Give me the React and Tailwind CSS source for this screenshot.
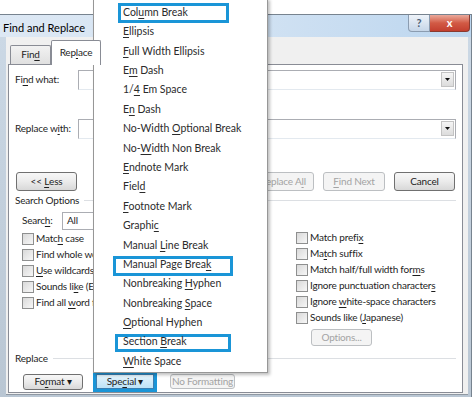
import React from 'react'

// items of the "Special" popup; & marks the access key
const SPECIAL = [
  { t: 'Col&umn Break', box: 'left-[24px] top-0 w-[111px] h-[20px]' },
  { t: '&Ellipsis' },
  { t: '&Full Width Ellipsis' },
  { t: 'E&m Dash' },
  { t: '1/&4 Em Space' },
  { t: 'E&n Dash' },
  { t: 'No-Width &Optional Break' },
  { t: 'No-&Width Non Break' },
  { t: '&Endnote Mark' },
  { t: 'Fiel&d' },
  { t: '&Footnote Mark' },
  { t: 'Graphi&c' },
  { t: 'Manual &Line Break' },
  { t: 'Manual Page Brea&k', box: 'left-[19px] top-[1px] w-[120px] h-[20px]' },
  { t: 'Nonbreaking &Hyphen' },
  { t: 'Nonbreaking &Space' },
  { t: '&Optional Hyphen' },
  { t: 'Section &Break', box: 'left-[21px] top-[1px] w-[116px] h-[18px]' },
  { t: '&White Space' },
]

// left options are cut off by the popup, as in the screenshot
const LEFT_OPTS = ['Matc&h case', 'Find whole wo', '&Use wildcards', 'Sounds li&ke (En', 'Find all &word f']
const RIGHT_OPTS = ['Match prefi&x', 'Ma&tch suffix', 'Match half/full width for&ms', 'Ignore punctuation character&s', 'Ignore &white-space characters', 'Sounds like (&Japanese)']

function Acc({ t }) {
  const i = t.indexOf('&')
  if (i < 0) return <>{t}</>
  return (
    <>
      {t.slice(0, i)}
      <span className="underline decoration-1 underline-offset-[1.5px]">{t[i + 1]}</span>
      {t.slice(i + 2)}
    </>
  )
}

function Btn({ t, className = '', off }) {
  return (
    <div
      className={
        'flex items-center justify-center rounded-[3px] border whitespace-nowrap ' +
        (off
          ? 'border-[#bcbfc2] bg-[#f4f4f4] text-[#a3a3a3] '
          : 'border-[#707070] bg-gradient-to-b from-[#f7f7f7] via-[#ebebeb] to-[#d8d8d8] text-[#1c1c1c] ') +
        className
      }
    >
      <Acc t={t} />
    </div>
  )
}

function Check({ t }) {
  return (
    <div className="flex items-center h-[16px] gap-[2px] whitespace-nowrap">
      <span className="shrink-0 w-[12px] h-[12px] border border-[#8e8f8f] bg-gradient-to-br from-[#d9d9d9] to-[#f7f7f7]" />
      <span>
        <Acc t={t} />
      </span>
    </div>
  )
}

function Combo({ className = '' }) {
  return (
    <div className={'flex items-center justify-end h-[20px] bg-white border border-[#abadb3] border-b-[#e3e9ef] ' + className}>
      <div className="mr-[1px] w-[13px] h-[15px] flex items-center justify-center border border-[#c3c3c3] bg-gradient-to-b from-[#f5f5f5] to-[#dcdcdc]">
        <svg width="5" height="3" viewBox="0 0 5 3">
          <path d="M0 0h5L2.5 3z" fill="#111" />
        </svg>
      </div>
    </div>
  )
}

function Rule({ t, className = '' }) {
  return (
    <div className={'flex items-center h-[12px] pl-[6px] pr-[6px] gap-[5px] ' + className}>
      <span className="whitespace-nowrap">{t}</span>
      <span className="flex-1 h-px bg-[#dcdfe3]" />
    </div>
  )
}

export default function App() {
  return (
    <div className="relative w-[474px] h-[397px] overflow-hidden bg-white font-['Lato',sans-serif] text-[10px] tracking-[-0.2px] text-[#1e1e1e]">
      <div className="pt-[14px]">
        <div className="w-[472px] h-[383px] flex flex-col border-t border-r border-[#77838f] bg-[#cad8e6]">
          {/* title bar */}
          <div className="h-[23px] flex items-start bg-gradient-to-r from-[#dde8f4] via-[#d3e3f3] to-[#bcd6ef]">
            <div className="pl-[3px] pt-[5px] text-[11px] tracking-normal text-black">Find and Replace</div>
            <div className="ml-auto mr-[1px] flex">
              <div className="w-[22px] h-[17px] flex items-center justify-center rounded-bl-[4px] border border-t-0 border-[#8b9cb0] bg-gradient-to-b from-[#eef3f9] to-[#c6d6e8] text-[11px] font-bold text-[#4a5d73]">
                ?
              </div>
              <div className="w-[40px] h-[17px] flex items-center justify-center rounded-br-[4px] border border-t-0 border-l-0 border-[#8a3a30] bg-gradient-to-b from-[#e9a99b] via-[#d25a45] to-[#c33f2f] text-[11px] font-bold text-white">
                x
              </div>
            </div>
          </div>

          {/* frame + client */}
          <div className="flex-1 flex pl-[6px] pr-[3px] pb-[4px] bg-gradient-to-b from-[#cbd8e5] to-[#b9c6d3]">
            <div className="flex-1 flex flex-col bg-[#f0f0f0] pt-[3px] pl-[2px] pr-[5px] pb-[1px] border-b border-[#8f98a2]">
              {/* tabs */}
              <div className="h-[24px] flex items-end pl-[2px] relative z-10">
                <div className="w-[41px] h-[19px] flex items-center justify-center border border-b-0 border-[#898c95] rounded-t-[2px] bg-gradient-to-b from-[#f2f2f2] to-[#e0e0e0]">
                  <Acc t="Fin&d" />
                </div>
                <div className="w-[50px] h-[25px] -mb-[1px] flex items-center justify-center border border-b-0 border-[#898c95] rounded-t-[2px] bg-white">
                  <Acc t="Rep&lace" />
                </div>
              </div>

              {/* tab page */}
              <div className="flex-1 flex flex-col bg-white border border-[#898c95]">
                <div className="mt-[5px] flex items-center pl-[6px]">
                  <span className="w-[63px]">
                    <Acc t="Fi&nd what:" />
                  </span>
                  <Combo className="w-[378px]" />
                </div>
                <div className="mt-[29px] flex items-center pl-[6px]">
                  <span className="w-[63px]">
                    <Acc t="Replace w&ith:" />
                  </span>
                  <Combo className="w-[378px]" />
                </div>

                <div className="mt-[33px] flex items-center h-[19px] pl-[7px]">
                  <Btn t={'<<\u00a0&Less'} className="w-[61px] h-[19px]" />
                  <div className="ml-auto mr-[7px] flex gap-[9px]">
                    <Btn t="" className="w-[62px] h-[19px]" off />
                    <Btn t="Replace A&ll" className="w-[62px] h-[19px]" off />
                    <Btn t="&Find Next" className="w-[62px] h-[19px]" off />
                    <Btn t="Cancel" className="w-[61px] h-[19px]" />
                  </div>
                </div>

                <Rule t="Search Options" className="mt-[4px]" />

                <div className="mt-[5px] flex">
                  <div className="w-[287px] flex flex-col">
                    <div className="w-[84px] overflow-hidden pl-[13px]">
                      <div className="h-[18px] flex items-center">
                        <span className="w-[40px] shrink-0">
                          <Acc t="Searc&h:" />
                        </span>
                        <div className="shrink-0 w-[100px] h-[18px] flex items-center pl-[4px] bg-white border border-[#abadb3]">All</div>
                      </div>
                      <div className="mt-[1px] flex flex-col">
                        {LEFT_OPTS.map((o) => (
                          <Check key={o} t={o} />
                        ))}
                      </div>
                    </div>
                  </div>
                  <div className="pt-[18px] flex flex-col">
                    {RIGHT_OPTS.map((o) => (
                      <Check key={o} t={o} />
                    ))}
                    <Btn t="Options..." className="mt-[3px] ml-[15px] w-[61px] h-[17px]" off />
                  </div>
                </div>

                <Rule t="Replace" className="mt-[7px]" />

                <div className="mt-[6px] flex items-start pl-[14px]">
                  <Btn t="Fo&rmat ▾" className="mt-[3px] w-[60px] h-[16px]" />
                  <div className="ml-[10px] w-[64px] h-[21px] border-[3px] border-[#1a95d7]">
                    <div className="w-full h-full flex items-center justify-center border border-[#3c7fb1] bg-gradient-to-b from-[#e5f4fc] to-[#bde3f7]">
                      <Acc t="Spe&cial ▾" />
                    </div>
                  </div>
                  <Btn t="No Formatting" className="mt-[3px] ml-[13px] w-[65px] h-[15px]" off />
                </div>
              </div>
            </div>
          </div>
        </div>
      </div>

      {/* Special popup menu */}
      <div className="absolute left-[93px] top-[-2px] w-[175px] pt-[4px] pb-[1px] bg-white border border-[#979797] shadow-[2px_2px_3px_rgba(0,0,0,0.25)] text-[10.5px] tracking-normal text-[#2b2b2b]">
        {SPECIAL.map((it) => (
          <div key={it.t} className="relative h-[19.4px] flex items-center pl-[29px] whitespace-nowrap">
            {it.box && <div className={'absolute border-[3px] border-[#1a95d7] ' + it.box} />}
            <span className="relative">
              <Acc t={it.t} />
            </span>
          </div>
        ))}
      </div>
    </div>
  )
}
